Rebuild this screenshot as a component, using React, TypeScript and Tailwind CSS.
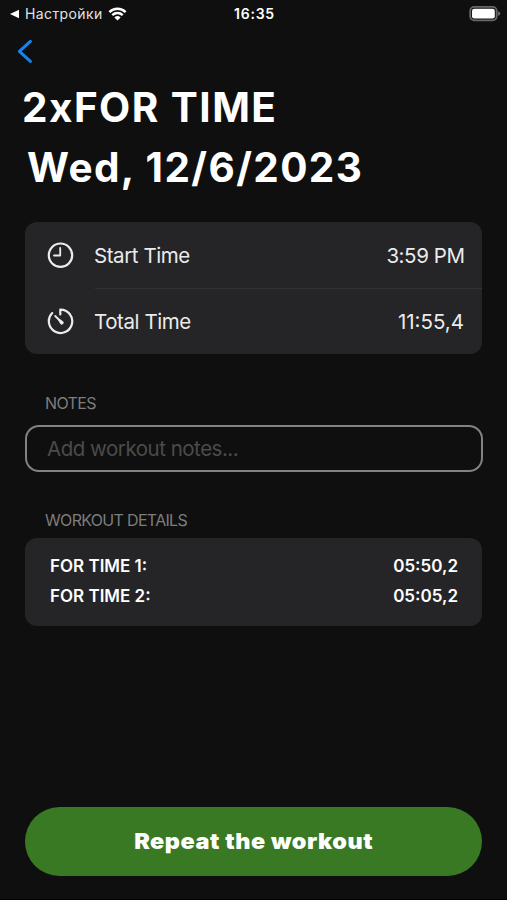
import type { ReactNode } from "react"

function StatusBar() {
	return (
		<div className="grid h-7 grid-cols-3 items-center pl-[9px] pr-[6px] text-[14px] leading-7">
			<div className="flex items-center">
				<svg className="mr-[5px] h-[10px] w-[11px] shrink-0" viewBox="0 0 11 10" fill="currentColor">
					<path d="M1 5 10 .8V9.2Z" />
				</svg>
				<span className="tracking-[0.4px] text-[#e2e2e2]">Настройки</span>
				<svg className="ml-[5px] h-[14px] w-[19px] shrink-0" viewBox="0 0 18 14" fill="none" stroke="currentColor" strokeWidth="2.5">
					<path d="M.9 5.1a11.6 11.6 0 0 1 16.2 0" />
					<path d="M3.8 8.2a7.5 7.5 0 0 1 10.4 0" />
					<path d="M9 13.6 5.9 10.5a4.5 4.5 0 0 1 6.2 0Z" fill="currentColor" stroke="none" />
				</svg>
			</div>
			<span className="-ml-px text-center font-semibold tracking-[0.75px]">16:35</span>
			<svg className="h-[16px] w-[32px] justify-self-end" viewBox="0 0 32 16">
				<rect x="1.2" y="0.9" width="26.5" height="13.4" rx="4" fill="#111" stroke="#68686a" strokeWidth="1.8" />
				<rect x="3" y="2.7" width="22.8" height="9.8" rx="2.2" fill="#fff" />
				<path d="M29 5.2v4.8q2.4-1 2.4-2.4T29 5.2Z" fill="#68686a" />
			</svg>
		</div>
	)
}

function ClockIcon() {
	return (
		<svg className="h-[27px] w-[27px]" viewBox="0 0 27 27" fill="none" stroke="currentColor" strokeLinecap="round" strokeLinejoin="round">
			<circle cx="13.5" cy="13.2" r="11.7" strokeWidth="2.2" />
			<path d="M13.2 6v7.5H7" strokeWidth="1.8" />
		</svg>
	)
}

function TimerIcon() {
	return (
		<svg className="h-[27px] w-[27px]" viewBox="0 0 27 27" fill="none" stroke="currentColor" strokeLinecap="round" strokeLinejoin="round">
			<path d="M13.3 6.4V1.6A11.7 11.7 0 1 1 5.2 5.1" strokeWidth="2.2" />
			<path d="M8.2 8 14.6 14.4" strokeWidth="1.8" />
			<path d="M9.2 8.4 15.6 12.9A1.9 1.9 0 1 1 13 15.5Z" fill="currentColor" stroke="none" />
		</svg>
	)
}

function TimeRow({ icon, label, children }: { icon: ReactNode; label: string; children: ReactNode }) {
	return (
		<div className="flex h-[66px] items-center pl-[22px] text-[20.5px] text-[#ebebec]">
			{icon}
			<div className="ml-[20px] flex flex-1 justify-between pr-[18px] pt-[2px]">
				<span className="tracking-[-0.43px]">{label}</span>
				{children}
			</div>
		</div>
	)
}

const rounds = [
	{ name: "FOR TIME 1:", time: "05:50,2" },
	{ name: "FOR TIME 2:", time: "05:05,2" },
]

export default function App() {
	return (
		<div className="flex h-[900px] w-full flex-col border-b border-black bg-[#0f0f0f] font-['Inter',sans-serif] text-white">
			<StatusBar />

			<button className="ml-[17px] mt-[11px] h-6 w-4 text-[#1684f0]" aria-label="Back">
				<svg className="h-6 w-4" viewBox="0 0 16 24" fill="none" stroke="currentColor" strokeWidth="3" strokeLinecap="round" strokeLinejoin="round">
					<path d="M13.4 2.4 2.4 12.4 13.4 22.4" />
				</svg>
			</button>

			<h1 className="mt-[15px] flex flex-col whitespace-nowrap text-[40.5px] font-bold leading-[60px]">
				<span className="pl-[22px] tracking-[1.45px]">2xFOR TIME</span>
				<span className="pl-[27px] tracking-[1.4px]">Wed, 12/6/2023</span>
			</h1>

			<div className="mx-[25px] mt-[24px] h-[132px] rounded-xl bg-[#252527]">
				<TimeRow icon={<ClockIcon />} label="Start Time">
					<span className="-mr-[0.5px] tracking-[-0.43px]">3:59 PM</span>
				</TimeRow>
				<div className="-mb-px ml-[70px] h-px bg-[#323234]" />
				<TimeRow icon={<TimerIcon />} label="Total Time">
					<span>11:55,4</span>
				</TimeRow>
			</div>

			<h2 className="ml-[45px] mt-[37px] text-[16px] leading-6 tracking-[-0.65px] text-[#7d7d7e]">NOTES</h2>
			<input
				className="ml-[25px] mr-[24px] mt-[10px] h-[47px] rounded-[14px] border-2 border-[#828282] bg-transparent px-[20px] text-[20.5px] tracking-[-0.48px] placeholder:text-[#4b4b4c] placeholder:opacity-100"
				placeholder="Add workout notes..."
			/>

			<h2 className="ml-[45px] mt-[36px] text-[16px] leading-6 tracking-[-0.68px] text-[#7d7d7e]">WORKOUT DETAILS</h2>
			<div className="mx-[25px] mt-[6px] h-[88px] rounded-xl bg-[#252527] pl-[25px] pr-[24px] pt-[14px]">
				{rounds.map((round) => (
					<div key={round.name} className="flex h-[29.5px] items-center justify-between text-[17px] font-semibold">
						<span>{round.name}</span>
						<span>{round.time}</span>
					</div>
				))}
			</div>

			<button className="mx-[25px] mb-[23px] mt-auto h-[69px] rounded-full bg-[#397923] text-[21.5px] font-black">
				<span className="inline-block scale-x-[1.09] tracking-[0.5px]">Repeat the workout</span>
			</button>
		</div>
	)
}
